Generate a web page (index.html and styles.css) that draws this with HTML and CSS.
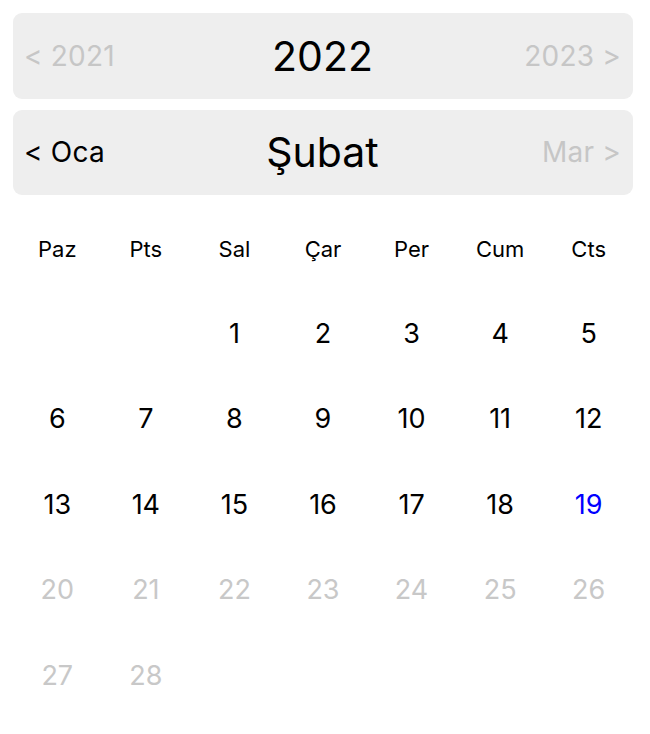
FILE: index.html
```html
<!DOCTYPE html>
<html lang="tr">
<head>
<meta charset="utf-8">
<link rel="stylesheet" href="styles.css">
</head>
<body>
<div class="picker">
  <div class="bar">
    <span class="nav nav-prev muted">&lt; 2021</span>
    <span class="title">2022</span>
    <span class="nav nav-next muted">2023 &gt;</span>
  </div>
  <div class="bar bar-month">
    <span class="nav nav-prev">&lt; Oca</span>
    <span class="title">Şubat</span>
    <span class="nav nav-next muted">Mar &gt;</span>
  </div>
  <div class="grid">
    <div class="wd">Paz</div><div class="wd">Pts</div><div class="wd">Sal</div><div class="wd">Çar</div><div class="wd">Per</div><div class="wd">Cum</div><div class="wd">Cts</div>
    <div class="day"></div><div class="day"></div><div class="day">1</div><div class="day">2</div><div class="day">3</div><div class="day">4</div><div class="day">5</div>
    <div class="day">6</div><div class="day">7</div><div class="day">8</div><div class="day">9</div><div class="day">10</div><div class="day">11</div><div class="day">12</div>
    <div class="day">13</div><div class="day">14</div><div class="day">15</div><div class="day">16</div><div class="day">17</div><div class="day">18</div><div class="day today">19</div>
    <div class="day future">20</div><div class="day future">21</div><div class="day future">22</div><div class="day future">23</div><div class="day future">24</div><div class="day future">25</div><div class="day future">26</div>
    <div class="day future">27</div><div class="day future">28</div>
  </div>
</div>
</body>
</html>
```
FILE: styles.css
```css
html, body {
  margin: 0;
  padding: 0;
  background: #ffffff;
}
body {
  font-family: Inter, "Noto Sans", sans-serif;
  color: #000;
}
.picker {
  padding: 13px 17px 0 13px;
  display: flex;
  flex-direction: column;
}
.bar {
  height: 85.5px;
  background: #eeeeee;
  border-radius: 9px;
  display: flex;
  align-items: center;
  justify-content: space-between;
  padding: 0 12px 0 11px;
}
.bar-month {
  margin-top: 11px;
}
.nav {
  font-size: 28px;
  width: 130px;
  letter-spacing: 0.2px;
}
.nav-next {
  text-align: right;
}
.muted {
  color: #c6c6c6;
}
.title {
  font-size: 41px;
  flex: 1;
  text-align: center;
}
.grid {
  margin-top: 10px;
  display: grid;
  grid-template-columns: repeat(7, 1fr);
  grid-auto-rows: 85.5px;
}
.wd, .day {
  display: flex;
  align-items: center;
  justify-content: center;
}
.wd {
  font-size: 22px;
  padding-top: 2px;
}
.day {
  font-size: 27px;
}
.today {
  color: #0000ff;
}
.future {
  color: #c8c8c8;
}
```
